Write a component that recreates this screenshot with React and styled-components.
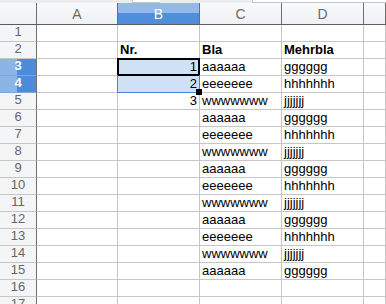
import styled, { createGlobalStyle, css } from "styled-components";

const GlobalStyle = createGlobalStyle`
  html, body {
    margin: 0;
    padding: 0;
    background: #ffffff;
    overflow: hidden;
  }
  body {
    font-family: "Liberation Sans", Arial, sans-serif;
  }
`;

const Wrap = styled.div`
  width: 386px;
  height: 304px;
  overflow: hidden;
  background: #fff;
`;

const TopStrip = styled.div`
  display: flex;
  height: 3px;
  background: #ececec;
`;

const TopBox = styled.div`
  box-sizing: border-box;
  height: 3px;
  background: #fff;
  border-left: 1px solid #c4c4c4;
  border-bottom: 1px solid #c4c4c4;
  margin-left: ${(p) => p.$ml}px;
  width: ${(p) => (p.$w ? p.$w + "px" : "auto")};
  flex: ${(p) => (p.$w ? "none" : 1)};
`;

const Sheet = styled.div`
  display: grid;
  grid-template-columns: 37px 81px 82px 82px 82px 1fr;
  grid-template-rows: 22px;
  grid-auto-rows: 17px;
`;

const Corner = styled.div`
  box-sizing: border-box;
  background: linear-gradient(#f9fafb, #eef0f3);
  border-right: 1px solid #6e6e6e;
  border-bottom: 1px solid #5c5c5c;
`;

const ColHead = styled.div`
  box-sizing: border-box;
  display: flex;
  align-items: center;
  justify-content: center;
  padding-top: 1px;
  font-size: 14px;
  color: #6b6b6b;
  background: linear-gradient(#f9fafb, #eef0f3);
  border-right: 1px solid #6e6e6e;
  border-bottom: 1px solid #5c5c5c;
  ${(p) =>
    p.$active &&
    css`
      color: #fff;
      background: linear-gradient(#93b9ea 0%, #93b9ea 50%, #4f8edb 50%, #4f8edb 100%);
    `}
`;

const RowHead = styled.div`
  box-sizing: border-box;
  display: flex;
  align-items: flex-end;
  justify-content: center;
  padding-bottom: 2px;
  font-size: 13px;
  line-height: 14px;
  color: #666;
  background: #f4f5f7;
  border-right: 1px solid #6e6e6e;
  border-bottom: 1px solid #c6c6c6;
  ${(p) =>
    p.$active &&
    css`
      color: #fff;
      font-weight: bold;
      background: linear-gradient(90deg, #8db4e7 0%, #8db4e7 47%, #4d8cdb 47%, #4d8cdb 100%);
      border-bottom-color: #7aa6df;
    `}
`;

const Cell = styled.div`
  box-sizing: border-box;
  position: relative;
  padding: 0 2px 0 2px;
  font-size: 13px;
  line-height: 16px;
  color: #000;
  white-space: nowrap;
  overflow: visible;
  text-align: ${(p) => (p.$right ? "right" : "left")};
  font-weight: ${(p) => (p.$bold ? "bold" : "normal")};
  border-right: 1px solid #c6c6c6;
  border-bottom: 1px solid #c6c6c6;
  ${(p) =>
    p.$sel &&
    css`
      background: #cfe1f6;
    `}
  ${(p) =>
    p.$cursor &&
    css`
      &::after {
        content: "";
        position: absolute;
        top: -1px;
        left: -1px;
        right: -1px;
        bottom: -1px;
        border: 2px solid #000;
      }
    `}
  ${(p) =>
    p.$rangeEnd &&
    css`
      z-index: 2;
      &::after {
        content: "";
        position: absolute;
        top: -1px;
        left: -1px;
        right: -1px;
        bottom: -1px;
        border: 1px solid #3f86d9;
        border-top: none;
      }
      &::before {
        content: "";
        position: absolute;
        right: -3px;
        bottom: -3px;
        width: 6px;
        height: 6px;
        background: #000;
        z-index: 3;
      }
    `}
`;

const cols = ["A", "B", "C", "D", "E"];
const cText = ["aaaaaa", "eeeeeee", "wwwwwww"];
const dText = ["gggggg", "hhhhhhh", "jjjjjjj"];

function rowData(r) {
  const row = { A: "", B: "", C: "", D: "", E: "" };
  if (r === 2) {
    row.B = "Nr.";
    row.C = "Bla";
    row.D = "Mehrbla";
  }
  if (r >= 3 && r <= 5) row.B = String(r - 2);
  if (r >= 3 && r <= 15) {
    row.C = cText[(r - 3) % 3];
    row.D = dText[(r - 3) % 3];
  }
  return row;
}

function App() {
  const rows = Array.from({ length: 17 }, (_, i) => i + 1);
  return (
    <Wrap>
      <GlobalStyle />
      <TopStrip>
        <TopBox $ml={132} $w={28} />
        <TopBox $ml={92} />
      </TopStrip>
      <Sheet>
        <Corner />
        {cols.map((c) => (
          // the E column is cut off by the window, its letter lies beyond the edge
          <ColHead key={c} $active={c === "B"}>
            {c === "E" ? "" : c}
          </ColHead>
        ))}
        {rows.map((r) => {
          const data = rowData(r);
          return [
            <RowHead key={"h" + r} $active={r === 3 || r === 4}>
              {r}
            </RowHead>,
            ...cols.map((c) => (
              <Cell
                key={c + r}
                $bold={r === 2}
                $right={c === "B" && r >= 3}
                $sel={c === "B" && (r === 3 || r === 4)}
                $cursor={c === "B" && r === 3}
                $rangeEnd={c === "B" && r === 4}
              >
                {data[c]}
              </Cell>
            )),
          ];
        })}
      </Sheet>
    </Wrap>
  );
}

export default App;
